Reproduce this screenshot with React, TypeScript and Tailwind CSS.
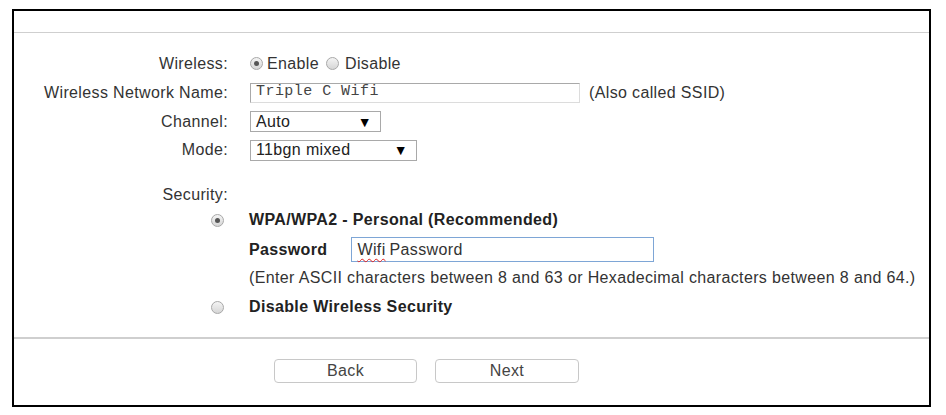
import React from "react";

function Radio({ checked = false }: { checked?: boolean }) {
  return (
    <span className="flex h-[13px] w-[13px] items-center justify-center rounded-full border border-[#a8a8a8] bg-gradient-to-b from-[#f4f4f4] to-[#d6d6d6]">
      {checked && <span className="h-[5px] w-[5px] rounded-full bg-[#555]" />}
    </span>
  );
}

function FakeSelect({ value, width }: { value: string; width: string }) {
  return (
    <div
      className={`flex h-[21px] items-center justify-between border border-[#a9a9a9] bg-white pl-[5px] pr-[8px] text-[16px] leading-none text-[#222] ${width}`}
    >
      <span>{value}</span>
      <span className="text-[14px] text-black">▼</span>
    </div>
  );
}

function Label({ children }: { children: React.ReactNode }) {
  return <div className="flex items-center justify-end text-[#333]">{children}</div>;
}

export default function App() {
  return (
    <div className="h-[415px] w-[946px] bg-white pl-[12px] pt-[9px] font-['Liberation_Sans',Arial,sans-serif] text-[16px] tracking-[0.36px]">
      <div className="flex h-[398px] w-[919px] flex-col border-2 border-black">
        <div className="h-[22px] border-b border-[#cfcfcf]" />

        <div className="grid grid-cols-[214px_1fr] gap-x-[22px] pt-[16px]">
          <Label>Wireless:</Label>
          <div className="flex h-[29px] items-center text-[#333]">
            <Radio checked />
            <span className="ml-[4px]">Enable</span>
            <span className="ml-[7px]">
              <Radio />
            </span>
            <span className="ml-[6px]">Disable</span>
          </div>

          <Label>Wireless Network Name:</Label>
          <div className="flex h-[29px] items-center text-[#333]">
            <div className="flex h-[20px] w-[330px] items-center border border-[#dcdcdc] border-l-[#a9a9a9] border-t-[#a9a9a9] pl-[5px] font-['Liberation_Mono','Courier_New',monospace] text-[15px] tracking-[0.45px] text-[#444]">
              Triple C Wifi
            </div>
            <span className="ml-[9px]">(Also called SSID)</span>
          </div>

          <Label>Channel:</Label>
          <div className="flex h-[29px] items-center">
            <FakeSelect value="Auto" width="w-[131px]" />
          </div>

          <Label>Mode:</Label>
          <div className="flex h-[28px] items-center">
            <FakeSelect value="11bgn mixed" width="w-[167px]" />
          </div>

          <div className="col-span-2 h-[17px]" />

          <Label>Security:</Label>
          <div className="h-[28px]" />

          <div className="flex h-[22px] items-center justify-end pr-[4px]">
            <Radio checked />
          </div>
          <div className="-ml-[1px] flex h-[22px] items-center font-bold text-[#222]">
            WPA/WPA2 - Personal (Recommended)
          </div>

          <div />
          <div className="-ml-[1px] flex h-[37px] items-center">
            <span className="font-bold text-[#222]">Password</span>
            <div className="ml-[24px] flex h-[25px] w-[303px] items-center border border-[#7ea6d6] pl-[5px] text-[#333]">
              <span className="underline decoration-[#e02020] decoration-wavy decoration-1 underline-offset-[3px]">
                Wifi
              </span>
              <span className="ml-[4px]">Password</span>
            </div>
          </div>

          <div />
          <div className="-ml-[1px] flex h-[20px] items-center text-[#333]">
            (Enter ASCII characters between 8 and 63 or Hexadecimal characters between 8 and 64.)
          </div>

          <div className="flex h-[38px] items-center justify-end pr-[4px]">
            <Radio />
          </div>
          <div className="-ml-[1px] flex h-[38px] items-center font-bold text-[#222]">
            Disable Wireless Security
          </div>
        </div>

        <div className="mt-[11px] h-[2px] bg-[#cfcfcf]" />

        <div className="flex gap-[18px] pl-[260px] pt-[20px]">
          <button className="flex h-[24px] w-[143px] items-center justify-center rounded-[4px] border border-[#c8c8c8] bg-white text-[#444]">
            Back
          </button>
          <button className="flex h-[24px] w-[144px] items-center justify-center rounded-[4px] border border-[#c8c8c8] bg-white text-[#444]">
            Next
          </button>
        </div>
      </div>
    </div>
  );
}
